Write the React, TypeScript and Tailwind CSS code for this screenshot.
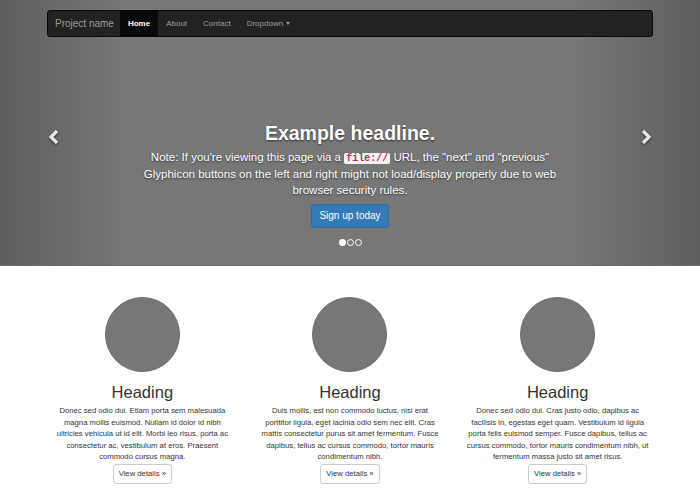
import React from 'react'

const cols = [
  {
    text: 'Donec sed odio dui. Etiam porta sem malesuada magna mollis euismod. Nullam id dolor id nibh ultricies vehicula ut id elit. Morbi leo risus, porta ac consectetur ac, vestibulum at eros. Praesent commodo cursus magna.',
  },
  {
    text: 'Duis mollis, est non commodo luctus, nisi erat porttitor ligula, eget lacinia odio sem nec elit. Cras mattis consectetur purus sit amet fermentum. Fusce dapibus, tellus ac cursus commodo, tortor mauris condimentum nibh.',
  },
  {
    text: 'Donec sed odio dui. Cras justo odio, dapibus ac facilisis in, egestas eget quam. Vestibulum id ligula porta felis euismod semper. Fusce dapibus, tellus ac cursus commodo, tortor mauris condimentum nibh, ut fermentum massa justo sit amet risus.',
  },
]

function Chevron({ dir }: { dir: 'left' | 'right' }) {
  return (
    <svg width="12" height="16" viewBox="0 0 12 16" className="drop-shadow-[0_1px_1px_rgba(0,0,0,0.6)]">
      <polyline
        points={dir === 'left' ? '9,2 3,8 9,14' : '3,2 9,8 3,14'}
        fill="none"
        stroke="#e6e6e6"
        strokeWidth="3.2"
      />
    </svg>
  )
}

export default function App() {
  return (
    <div className="w-[700px] min-h-[498px] bg-white font-['Liberation_Sans',Arial,sans-serif] text-[#333]">
      {/* carousel */}
      <div className="relative h-[266px] bg-[linear-gradient(to_right,#5e5e5e,#777_18%,#777_82%,#5e5e5e)] flex flex-col items-center pt-[10px] border-b border-[#6a6a6a]">
        <nav className="w-[606px] h-[27px] bg-[#222] border border-[#080808] rounded-[3px] flex items-stretch text-[8px] text-[#9d9d9d]">
          <div className="flex items-center pl-[7px] pr-[6px] text-[10px]">Project name</div>
          <div className="flex items-center px-[8px] bg-[#080808] text-white font-bold">Home</div>
          <div className="flex items-center px-[8px]">About</div>
          <div className="flex items-center px-[8px]">Contact</div>
          <div className="flex items-center px-[8px] gap-[3px]">
            Dropdown
            <span className="inline-block w-0 h-0 border-x-[2.5px] border-x-transparent border-t-[3px] border-t-[#9d9d9d]" />
          </div>
        </nav>

        <div className="mt-[84px] flex flex-col items-center text-white text-center [text-shadow:0_1px_2px_rgba(0,0,0,0.6)]">
          <h1 className="text-[19.5px] font-bold leading-[24px]">Example headline.</h1>
          <p className="mt-[4px] w-[420px] text-[11.5px] leading-[16.5px]">
            Note: If you're viewing this page via a{' '}
            <code className="font-['Liberation_Mono',monospace] font-bold text-[10px] leading-[12px] text-[#c7254e] bg-[#f9f2f4] rounded-[2px] px-[2px] [text-shadow:none]">
              file://
            </code>{' '}
            URL, the "next" and "previous" Glyphicon buttons on the left and right might not load/display properly due to web browser security rules.
          </p>
          <button className="mt-[5px] w-[78px] h-[24px] rounded-[3px] bg-[#337ab7] border border-[#2e6da4] text-[10px] text-white [text-shadow:none]">
            Sign up today
          </button>
          <div className="mt-[11px] flex gap-[1px] items-center">
            <span className="w-[7px] h-[7px] rounded-full bg-white" />
            <span className="w-[7px] h-[7px] rounded-full border border-white" />
            <span className="w-[7px] h-[7px] rounded-full border border-white" />
          </div>
        </div>

        <div className="absolute left-[48px] top-[129px]">
          <Chevron dir="left" />
        </div>
        <div className="absolute right-[48px] top-[129px]">
          <Chevron dir="right" />
        </div>
      </div>

      {/* marketing */}
      <div className="w-[623px] mx-auto grid grid-cols-3 pt-[31px]">
        {cols.map((c, i) => (
          <div key={i} className="px-[13px] flex flex-col items-center text-center">
            <div className="w-[75px] h-[75px] rounded-full bg-[#777] border border-[#6d6d6d]" />
            <h2 className="mt-[10px] text-[16.5px] leading-[20px]">Heading</h2>
            <p className="mt-[3px] text-[7.7px] leading-[11.5px]">{c.text}</p>
            <button className="mt-[1px] h-[20px] px-[5px] rounded-[3px] border border-[#ccc] bg-white text-[7.7px]">
              View details »
            </button>
          </div>
        ))}
      </div>
    </div>
  )
}
